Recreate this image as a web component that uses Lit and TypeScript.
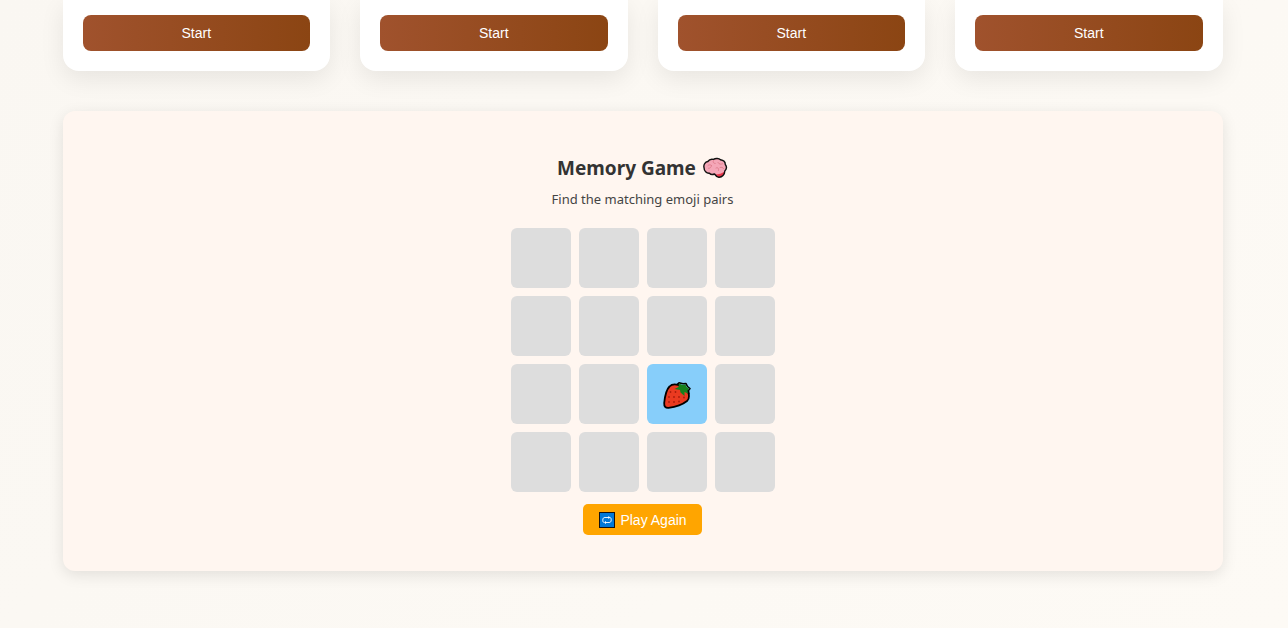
import { LitElement, html, css, svg } from "lit";
import { customElement, property, state } from "lit/decorators.js";
import { classMap } from "lit/directives/class-map.js";

const brainIcon = svg`
  <svg class="brain" viewBox="0 0 26 22" role="img" aria-label="brain">
    <path fill="#f4a6b7" d="M2 10.500C1.300 7.500 3.200 5 5.800 4.500C7.300 2.300 10 2 11.500 2.400C13.500 1 17 1.200 18.500 2.800C21.500 3.300 23.300 5.500 23.300 7.500C24.800 9.500 24.500 12.300 22.800 14C22.800 17.500 20 20.500 16.800 20.200C14.500 20 13.500 18.500 12.500 17C10.500 17.800 8.500 17.500 7.500 16.200C4.500 16.500 2 14 2 10.500Z"/>
    <path fill="#e8364a" d="M13 17.500C17 17.500 20 16.300 22.600 14.500C22 18 19.800 20.300 16.800 20.200C15 20 13.800 19 13 17.500Z"/>
    <path fill="none" stroke="#e0808f" stroke-width="1" stroke-linecap="round" d="M6 8.500C7 7.500 8.500 7.500 9.500 8.500M11.500 3.500C10.500 5 11.500 6.500 13.200 6.500M9.500 8.500C9.300 10.500 8 11.500 6.500 11.300M16 5.500C17 7.500 19 7.500 20.500 6.800M14 11C16 10 17 11.500 16.500 13.500M18 10.500C19.500 9.800 21 10.500 21.500 11.500"/>
    <path fill="none" stroke="#111" stroke-width="1.400" stroke-linejoin="round" d="M2 10.500C1.300 7.500 3.200 5 5.800 4.500C7.300 2.300 10 2 11.500 2.400C13.500 1 17 1.200 18.500 2.800C21.500 3.300 23.300 5.500 23.300 7.500C24.800 9.500 24.500 12.300 22.800 14C22.800 17.500 20 20.500 16.800 20.200C14.500 20 13.500 18.500 12.500 17C10.500 17.800 8.500 17.500 7.500 16.200C4.500 16.500 2 14 2 10.500Z"/>
  </svg>`;

const strawberryIcon = svg`
  <svg class="berry" viewBox="0 0 30 30" role="img" aria-label="strawberry">
    <path fill="#ea3a20" stroke="#000" stroke-width="1.800" stroke-linejoin="round" d="M7.500 6.500C9.500 4.300 13 4 16 4.800L25 10.500C27.500 14 27.800 18.500 25 21C20 25 13 27 6.500 27.800C3.500 28 2 26.500 2.200 23C2.800 17 4 10 7.500 6.500Z"/>
    <g fill="#a81c0c">
      <circle cx="8.500" cy="12" r=".9"/><circle cx="13.500" cy="12" r=".9"/><circle cx="7" cy="17" r=".9"/>
      <circle cx="12" cy="17" r=".9"/><circle cx="17" cy="17" r=".9"/><circle cx="22" cy="17.500" r=".9"/>
      <circle cx="7" cy="22" r=".9"/><circle cx="12" cy="22" r=".9"/><circle cx="17" cy="21.500" r=".9"/>
    </g>
    <path fill="none" stroke="#000" stroke-width="1.600" stroke-linejoin="round" d="M15 4.500L17 2.800L21 3.800L24 3.500L25.500 6.500L28 8.500L26.500 10.500L27 14.500"/>
    <path fill="#16801c" d="M17 3.500L20.500 5L23.500 4.500L24.500 7L27 8.500L25.500 10.500L26 13.500L22.500 12L22.500 16L18.500 12.500L18 10L12.500 9L16.500 7Z"/>
  </svg>`;

const repeatIcon = svg`
  <svg class="repeat" viewBox="0 0 16 16" aria-hidden="true">
    <rect x=".5" y=".5" width="15" height="15" fill="#0078d7" stroke="#111" stroke-width="1"/>
    <path fill="none" stroke="#fff" stroke-width=".9" d="M5 10.500C3.800 10.200 3.800 9 3.800 8C3.800 6.200 4.500 5.500 6 5.500H10M11 5.500C12.200 5.800 12.200 7 12.200 8C12.200 9.800 11.500 10.500 10 10.500H6.500"/>
    <path fill="#fff" d="M9.300 4L11.300 5.500L9.300 7ZM7 9L5 10.500L7 12Z"/>
  </svg>`;

@customElement("activity-card")
class ActivityCard extends LitElement {
  static styles = css`
    :host {
      display: block;
      padding: 15px 20px 20px;
      border-radius: 16px;
      background: #fff;
      box-shadow: 0 8px 25px rgba(0, 0, 0, 0.08);
    }
    .start {
      display: block;
      width: 100%;
      height: 36px;
      padding: 0;
      border: 0;
      border-radius: 8px;
      background: linear-gradient(90deg, #a0522d, #8b4513);
      color: #fff;
      font: 14px/16px "Liberation Sans", Arial, sans-serif;
      cursor: pointer;
    }
  `;
  render() {
    return html`<button class="start" type="button">Start</button>`;
  }
}

@customElement("memory-game")
class MemoryGame extends LitElement {
  @property({ type: Number }) tiles = 16;
  @state() private open = 10;

  static styles = css`
    :host {
      display: flex;
      flex-direction: column;
      align-items: center;
      padding: 42px 36px 36px;
      border-radius: 12px;
      background: #fff6f0;
      box-shadow: 0 4px 15px rgba(0, 0, 0, 0.1);
      color: #333;
      font-family: "Segoe UI", "Noto Sans", sans-serif;
    }
    .title {
      display: flex;
      align-items: center;
      gap: 6px;
      margin: 0;
      font-size: 19px;
      line-height: 30px;
      font-weight: 700;
    }
    .brain {
      width: 26px;
      height: 22px;
    }
    .hint {
      margin: 6px 0 18px;
      font-size: 13px;
      line-height: 21px;
      color: #444;
    }
    .board {
      display: grid;
      grid-template-columns: repeat(4, 60px);
      grid-auto-rows: 60px;
      gap: 8px;
    }
    .tile {
      display: grid;
      place-items: center;
      padding: 0;
      border: 0;
      border-radius: 6px;
      background: #ddd;
      cursor: pointer;
    }
    .tile.open {
      background: #87cefa;
    }
    .berry {
      width: 30px;
      height: 30px;
      margin-top: 2px;
    }
    .again {
      display: flex;
      align-items: center;
      gap: 5px;
      height: 31px;
      margin-top: 12px;
      padding: 0 15px 0 16px;
      border: 0;
      border-radius: 5px;
      background: #ffa500;
      color: #fff;
      font: 14px/16px "Liberation Sans", Arial, sans-serif;
      cursor: pointer;
    }
    .repeat {
      width: 16px;
      height: 16px;
    }
  `;

  render() {
    return html`
      <h2 class="title">Memory Game ${brainIcon}</h2>
      <p class="hint">Find the matching emoji pairs</p>
      <div class="board">
        ${Array.from({ length: this.tiles }, (_, i) => html`
          <button
            type="button"
            class=${classMap({ tile: true, open: i === this.open })}
            aria-label=${`Tile ${i + 1}`}
          >${i === this.open ? strawberryIcon : ""}</button>`)}
      </div>
      <button class="again" type="button">${repeatIcon}<span>Play Again</span></button>
    `;
  }
}

@customElement("app-root")
class AppRoot extends LitElement {
  static styles = css`
    :host {
      display: block;
      box-sizing: border-box;
      min-height: 100vh;
      padding: 0 65px 57px 62px;
      background: linear-gradient(135deg, #faf7f2, #fdfaf5);
    }
    .page {
      display: grid;
      gap: 40px;
      max-width: 1160px;
      margin: 0 auto;
    }
    .cards {
      display: grid;
      grid-template-columns: repeat(auto-fit, minmax(250px, 1fr));
      gap: 30px;
    }
    .card {
      border-radius: 0 0 16px 16px;
    }
  `;
  render() {
    return html`
      <main class="page">
        <section class="cards">
          ${[0, 1, 2, 3].map(() => html`<activity-card class="card"></activity-card>`)}
        </section>
        <memory-game></memory-game>
      </main>
    `;
  }
}
